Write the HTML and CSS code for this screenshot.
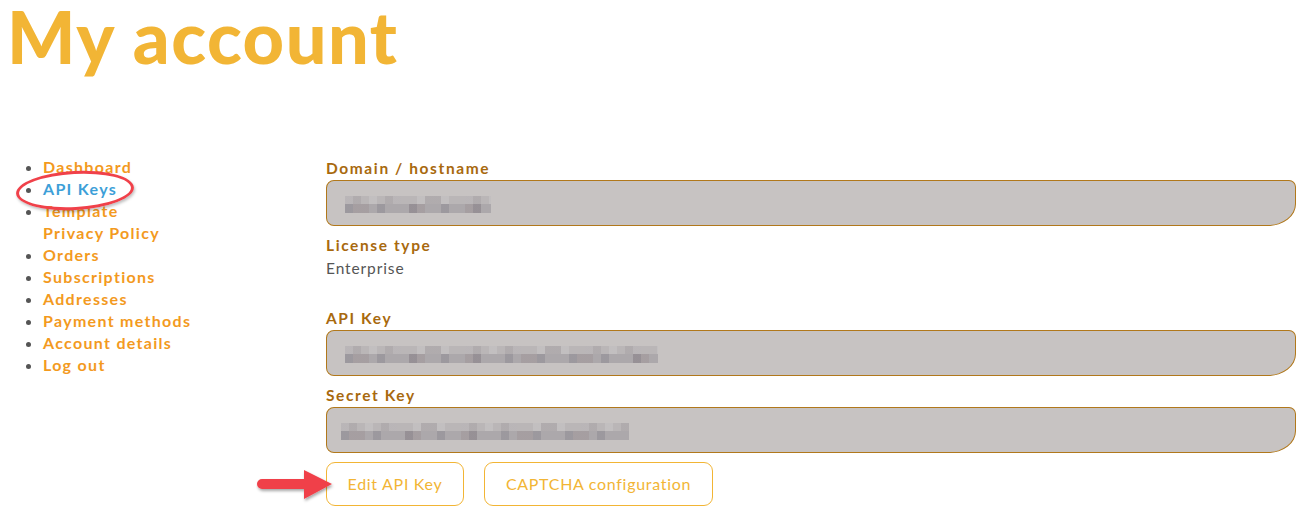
FILE: index.html
```html
<!DOCTYPE html>
<html>
<head>
<meta charset="utf-8">
<link rel="stylesheet" href="styles.css">
</head>
<body>
<div class="page">
  <h1 class="title">My account</h1>
  <div class="layout">
    <aside class="sidebar">
      <ul class="nav">
        <li><a href="#">Dashboard</a></li>
        <li class="active"><a href="#">API Keys</a></li>
        <li><a href="#">Template<br>Privacy Policy</a></li>
        <li><a href="#">Orders</a></li>
        <li><a href="#">Subscriptions</a></li>
        <li><a href="#">Addresses</a></li>
        <li><a href="#">Payment methods</a></li>
        <li><a href="#">Account details</a></li>
        <li><a href="#">Log out</a></li>
      </ul>
      <span class="circle"></span>
    </aside>
    <main class="content">
      <div class="field">
        <label class="label">Domain / hostname</label>
        <div class="input"><span class="mosaic m-domain"></span></div>
      </div>
      <div class="field">
        <div class="label">License type</div>
        <div class="value">Enterprise</div>
      </div>
      <div class="field spaced">
        <label class="label">API Key</label>
        <div class="input"><span class="mosaic m-api"></span></div>
      </div>
      <div class="field">
        <label class="label">Secret Key</label>
        <div class="input"><span class="mosaic m-secret"></span></div>
      </div>
      <div class="actions">
        <button class="btn">Edit API Key</button>
        <button class="btn">CAPTCHA configuration</button>
        <svg class="arrow" width="84" height="40" viewBox="0 0 84 40">
          <defs>
            <filter id="sh" x="-20%" y="-30%" width="140%" height="170%">
              <feDropShadow dx="1" dy="2" stdDeviation="1.5" flood-color="#000" flood-opacity="0.35"/>
            </filter>
          </defs>
          <g filter="url(#sh)">
            <path d="M6 15 H48 V6 L76 20 L48 35 V25 H6 A5 5 0 0 1 6 15 Z" fill="#f0414a"/>
          </g>
        </svg>
      </div>
    </main>
  </div>
</div>
</body>
</html>
```
FILE: styles.css
```css
* { box-sizing: border-box; }
html, body { margin: 0; background: #fff; }
body { font-family: "Lato", "Open Sans", sans-serif; }
.page { padding: 0 15px 0 8px; }
.title {
  margin: -8px 0 0 -1px;
  font-family: "Lato", sans-serif;
  font-weight: 900;
  font-size: 72px;
  line-height: 88px;
  color: #f2b535;
  letter-spacing: 1.5px;
  height: 165px;
}
.layout { display: flex; }
.sidebar { width: 318px; flex: none; position: relative; }
.nav {
  margin: -1px 0 0 0;
  padding-left: 35px;
  list-style: disc;
  color: #555;
  font-size: 16px;
  line-height: 22px;
  font-weight: 700;
  letter-spacing: 1.3px;
}
.nav a { color: #f39a1e; text-decoration: none; }
.nav li.active a { color: #3d9fd8; }
.circle {
  position: absolute;
  left: 8px;
  top: 14px;
  width: 118px;
  height: 39px;
  border: 3px solid #f0414a;
  border-radius: 50%;
  transform: rotate(-3deg);
  box-shadow: 1px 2px 3px rgba(0,0,0,0.25);
}
.content { flex: 1; display: flex; flex-direction: column; }
.field { display: flex; flex-direction: column; margin-bottom: 8px; }
.field.spaced { margin-top: 20px; }
.label {
  font-weight: 700;
  font-size: 15.5px;
  line-height: 22px;
  color: #a8690e;
  letter-spacing: 1.6px;
  margin-bottom: 1px;
}
.value { font-size: 15.5px; line-height: 22px; color: #555; letter-spacing: 0.9px; }
.input {
  height: 46px;
  background: #c7c3c2;
  border: 1px solid #b1781b;
  border-radius: 8px 7px 28px 8px / 8px 7px 22px 8px;
  display: flex;
  align-items: center;
  padding-left: 18px;
}
.mosaic {
  display: block;
  height: 17px;
  margin-top: 3px;
  background:
    repeating-linear-gradient(90deg, rgba(255,255,255,0.12) 0 8px, transparent 8px 24px) 0 0 / 100% 8px no-repeat,
    repeating-linear-gradient(90deg, rgba(90,80,90,0.10) 0 16px, transparent 16px 40px) 0 0 / 100% 8px no-repeat,
    repeating-linear-gradient(90deg, rgba(60,60,80,0.14) 0 8px, transparent 8px 32px) 0 8px / 100% 9px no-repeat,
    repeating-linear-gradient(90deg, rgba(120,90,90,0.12) 0 16px, transparent 16px 56px) 8px 8px / 100% 9px no-repeat,
    linear-gradient(#bab6b7 0 8px, #aca8ab 8px 17px);
}
.m-domain { width: 146px; }
.m-api { width: 313px; }
.m-secret { width: 288px; margin-left: -4px; }
.actions { display: flex; gap: 20px; margin-top: 1px; position: relative; }
.btn {
  font-family: "Lato", sans-serif;
  font-size: 16px;
  letter-spacing: 0.7px;
  color: #f2b535;
  background: #fff;
  border: 1px solid #f2b535;
  border-radius: 9px;
  height: 44px;
  padding: 0 12px;
  line-height: 40px;
}
.btn:first-child { width: 138px; }
.btn:nth-child(2) { width: 229px; }
.arrow { position: absolute; left: -70px; top: 2px; }
```
